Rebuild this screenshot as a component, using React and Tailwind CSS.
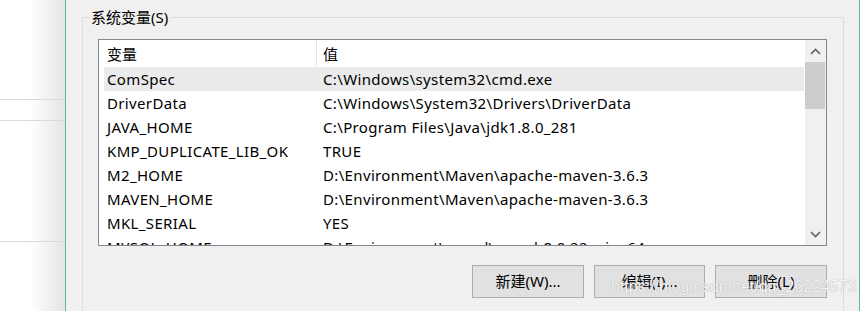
import React from 'react';

const rows = [
  ['ComSpec', 'C:\\Windows\\system32\\cmd.exe'],
  ['DriverData', 'C:\\Windows\\System32\\Drivers\\DriverData'],
  ['JAVA_HOME', 'C:\\Program Files\\Java\\jdk1.8.0_281'],
  ['KMP_DUPLICATE_LIB_OK', 'TRUE'],
  ['M2_HOME', 'D:\\Environment\\Maven\\apache-maven-3.6.3'],
  ['MAVEN_HOME', 'D:\\Environment\\Maven\\apache-maven-3.6.3'],
  ['MKL_SERIAL', 'YES'],
  ['MYSQL_HOME', 'D:\\Environment\\mysql\\mysql-8.0.22-winx64'],
];

function Chevron({ up }) {
  return (
    <svg width="11" height="7" viewBox="0 0 11 7" className="text-[#606060]">
      <polyline
        points={up ? '1,6 5.5,1.5 10,6' : '1,1 5.5,5.5 10,1'}
        fill="none"
        stroke="currentColor"
        strokeWidth="1.6"
      />
    </svg>
  );
}

function Button({ children }) {
  return (
    <div className="w-[112px] h-[33px] border border-[#adadad] bg-[#e1e1e1] flex items-center justify-center">
      {children}
    </div>
  );
}

export default function App() {
  return (
    <div className="w-[864px] h-[311px] flex overflow-hidden bg-white text-[15px] text-black font-[family-name:'Noto_Sans','Noto_Sans_CJK_SC',sans-serif]">
      {/* window behind the dialog */}
      <div className="w-[65px] shrink-0 bg-[linear-gradient(to_right,#ffffff_45%,#e4e4e4)]">
        <div className="h-[99px]" />
        <div className="h-[21px] border-t border-[#dadada]" />
        <div className="h-[121px] border-t border-[#dadada]" />
        <div className="border-t border-[#dadada]" />
      </div>

      {/* dialog */}
      <div className="relative w-[795px] shrink-0 border-x border-[#5fbb8c] bg-[#f0f0f0]">
        <fieldset className="mt-[7px] ml-[16px] mr-[15px] h-[330px] border border-[#dcdcdc]">
          <legend className="ml-[6px] px-[2px] leading-[20px]">系统变量(S)</legend>

          <div className="mt-[12px] ml-[15px] mr-[16px] h-[207px] border border-[#828790] bg-white flex overflow-hidden">
            <div className="flex-1 flex flex-col overflow-hidden">
              <div className="h-[27px] shrink-0 flex">
                <div className="w-[218px] pl-[8px] pt-[2px] border-r border-[#e5e5e5] flex items-center">变量</div>
                <div className="pl-[6px] pt-[2px] flex items-center">值</div>
              </div>
              {rows.map(([name, value], i) => (
                <div
                  key={name}
                  className={`ml-[5px] h-[24px] shrink-0 flex items-center tracking-[0.35px] ${i === 0 ? 'bg-[#ebebeb]' : ''}`}
                >
                  <div className="w-[219px] pl-[3px] whitespace-nowrap">{name}</div>
                  <div className="whitespace-nowrap">{value}</div>
                </div>
              ))}
            </div>

            {/* scrollbar */}
            <div className="w-[22px] shrink-0 border-l border-white bg-[#f0f0f0] flex flex-col">
              <div className="h-[22px] flex items-center justify-center">
                <Chevron up />
              </div>
              <div className="h-[47px] mr-[1px] bg-[#cdcdcd]" />
              <div className="flex-1" />
              <div className="h-[22px] flex items-center justify-center">
                <Chevron />
              </div>
            </div>
          </div>

          <div className="mt-[19px] mr-[16px] flex justify-end gap-[10px]">
            <Button>新建(W)...</Button>
            <div className="w-[111px] h-[33px] border border-[#adadad] bg-[#e1e1e1] flex items-center justify-center">
              编辑(I)...
            </div>
            <Button>删除(L)</Button>
          </div>
        </fieldset>

        {/* watermark */}
        <div className="absolute left-[545px] top-[277px] text-[16px] leading-[20px] text-white/90 font-[family-name:'Liberation_Sans',Arial,sans-serif] [text-shadow:0_0_1px_#8a8a8a]">
          https://blog.csdn.net/qq_26224573
        </div>
      </div>

      <div className="flex-1 bg-white" />
    </div>
  );
}
